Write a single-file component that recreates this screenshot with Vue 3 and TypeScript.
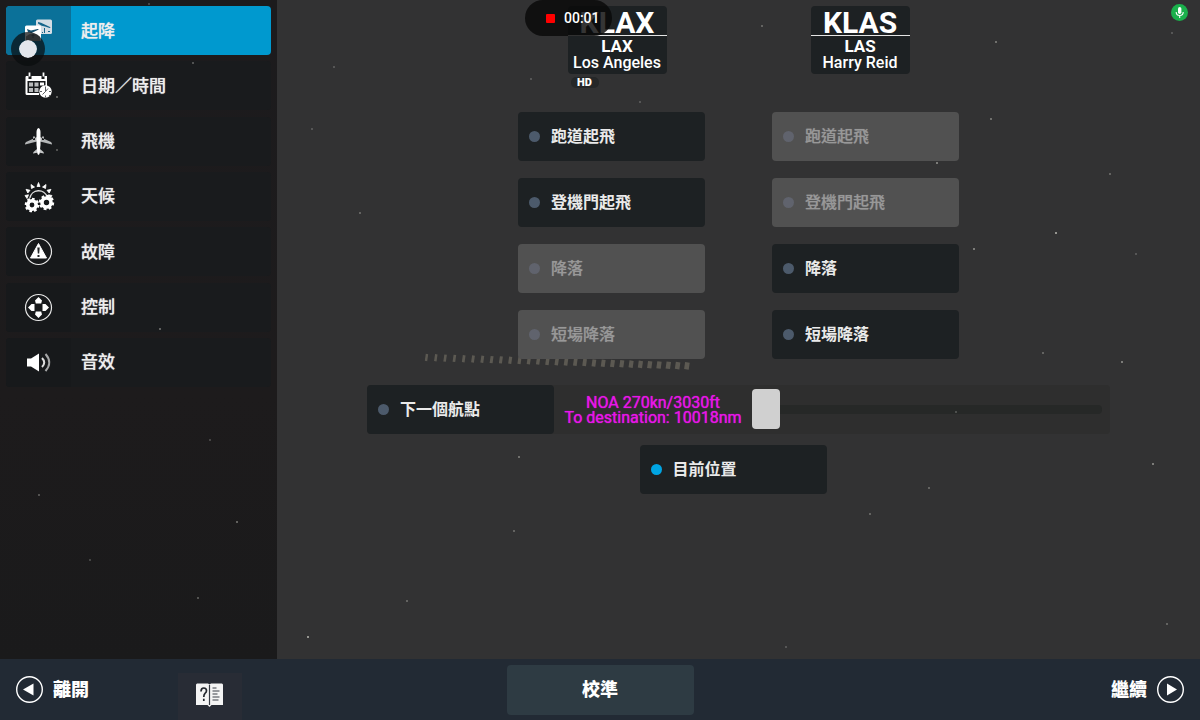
<script setup lang="ts">
import { ref } from 'vue'

interface MenuItem { id: string; label: string }
interface StartOption { id: string; label: string; disabled: boolean }

const menu: MenuItem[] = [
  { id: 'route', label: '起降' },
  { id: 'date', label: '日期／時間' },
  { id: 'plane', label: '飛機' },
  { id: 'weather', label: '天候' },
  { id: 'failure', label: '故障' },
  { id: 'control', label: '控制' },
  { id: 'sound', label: '音效' },
]
const options: StartOption[] = [
  { id: 'dep-runway', label: '跑道起飛', disabled: false },
  { id: 'arr-runway', label: '跑道起飛', disabled: true },
  { id: 'dep-gate', label: '登機門起飛', disabled: false },
  { id: 'arr-gate', label: '登機門起飛', disabled: true },
  { id: 'dep-landing', label: '降落', disabled: true },
  { id: 'arr-landing', label: '降落', disabled: false },
  { id: 'dep-short', label: '短場降落', disabled: true },
  { id: 'arr-short', label: '短場降落', disabled: false },
]
const airports = [
  { icao: 'KLAX', iata: 'LAX', name: 'Los Angeles', hd: true },
  { icao: 'KLAS', iata: 'LAS', name: 'Harry Reid', hd: false },
]
const stars: [number, number, number][] = [
  [762, 26, 0.4], [996, 42, 0.5], [991, 119, 0.5], [937, 163, 0.6], [1056, 233, 0.8], [974, 249, 0.6],
  [1043, 353, 0.4], [1122, 362, 0.6], [1153, 464, 0.6], [929, 488, 0.4], [870, 514, 0.4], [514, 531, 0.4],
  [519, 457, 0.5], [360, 213, 0.4], [308, 637, 0.8], [312, 129, 0.3], [334, 67, 0.3], [531, 79, 0.3],
  [640, 102, 0.3], [1110, 174, 0.4], [1167, 624, 0.4], [237, 522, 0.5], [160, 329, 0.5], [193, 63, 0.4],
  [57, 97, 0.5], [57, 150, 0.4], [149, 4, 0.3], [39, 495, 0.4], [198, 598, 0.4], [1136, 254, 0.3],
  [407, 601, 0.4], [786, 647, 0.3], [210, 440, 0.3], [90, 560, 0.3], [956, 412, 0.3], [1172, 33, 0.3],
]
const cabinWindows = Array.from({ length: 29 }, (_, i) => ({
  x: 426 + i * 9.3,
  y: 357 + i * 0.3,
  w: 2.4 + i * 0.08,
}))

const active = ref('route')
const start = ref('current')
const progress = ref(0)
</script>

<template>
  <div class="screen">
    <div class="body">
      <aside class="sidebar">
        <nav class="menu" aria-label="設定">
          <button
            v-for="item in menu"
            :key="item.id"
            type="button"
            class="menu-item"
            :class="{ active: active === item.id }"
            @click="active = item.id"
          >
            <span class="menu-icon">
              <svg viewBox="0 0 27 27" aria-hidden="true">
                <g v-if="item.id === 'route'">
                  <rect x="11" y="2.500" width="16" height="14.500" rx="1.500" fill="#d4dde4" />
                  <path d="M13 5l3 .7 9 4.200q1.400 1-.4 1l-4.600-1.400-3.400-.8L13 6.500z" fill="#17658a" />
                  <path d="M19.500 11v5M17 15.500h1M23 14.500h2" stroke="#17658a" stroke-width="1" />
                  <rect x="0" y="8.500" width="16" height="15.500" rx="1.500" fill="#fff" />
                  <path d="M2 12l4 1.600 6.500-1.600q2-.2.8.8L6.500 16l-3.500-.7z" fill="#17506d" />
                  <path d="M1 19.500q6.500-6 14 0V24H1z" fill="#8b8f91" />
                  <path d="M8 17v4M6.500 18.500h3" stroke="#4c5c66" stroke-width="1" />
                </g>
                <g v-else-if="item.id === 'date'">
                  <path d="M1 4h2.500v3h3V4h10v3h3V4H22v10.500h-1.500V9h-18v12H14v2H2q-1.500 0-1.500-1.500V5z" fill="#fff" />
                  <path d="M4.500 .5v4M18.500 .5v4" stroke="#fff" stroke-width="1.800" />
                  <path d="M4 10.500h4v4H4zM9.500 10.500h4v4h-4zM4 16h4v4H4zM9.500 16h4v4h-4z" fill="#b9bbbc" />
                  <path d="M15 10.500h4v3h-4z" fill="#fff" />
                  <circle cx="20.500" cy="19.500" r="6.200" fill="#fff" />
                  <path d="M20.500 14.500v5l-3 3M20.500 19.500l2.500-3M15 19.500h2M24 19.500h2M20.500 23.500v2M24 23l1 1" stroke="#4a4d50" stroke-width=".9" fill="none" />
                </g>
                <g v-else-if="item.id === 'plane'">
                  <path d="M12 9L1 14q-1.200 1-1 2.500l12-3h3l12 3q.2-1.500-1-2.500L15 9zM8 8.500h2V12H8zM17 8.500h2V12h-2z" fill="#b4b6b7" />
                  <path d="M12 21l-3.500 3-.5 1.500 5.500-1 5.500 1-.5-1.500L15 21z" fill="#c4c6c7" />
                  <path d="M11.500 4q.2-3.500 2-4 1.800.5 2 4v13l-1 9-1 1-1-1-1-9z" fill="#fff" />
                </g>
                <g v-else-if="item.id === 'weather'">
                  <path d="M4.800 15a9 9 0 0 1 17.400-1" fill="none" stroke="#ddd" stroke-width="1.300" />
                  <path
                    d="M12 3.500L13.500-.5 15 3.500zM6.500 5.500L6 1.500l3.500 2.500zM17.500 4L21 1.500l-.5 4zM2.800 10L1 6.300l4 1zM22 7.300l4-1L24.200 10zM2 15.500L0 12.500l3.500-.7zM23.500 11.800l3.500.7-2 3z"
                    fill="#fff"
                    stroke="#fff"
                    stroke-width=".8"
                  />
                  <circle cx="7" cy="22" r="4.200" fill="none" stroke="#fff" stroke-width="3.600" />
                  <circle cx="7" cy="22" r="6.200" pathLength="16" fill="none" stroke="#fff" stroke-width="2.200" stroke-dasharray="1.100 .9" />
                  <circle cx="21.500" cy="19.500" r="4.500" fill="none" stroke="#fff" stroke-width="3.600" />
                  <circle cx="21.500" cy="19.500" r="6.600" pathLength="16" fill="none" stroke="#fff" stroke-width="2.200" stroke-dasharray="1.100 .9" />
                </g>
                <g v-else-if="item.id === 'failure'">
                  <circle cx="13.500" cy="13.500" r="13" fill="none" stroke="#e6e6e6" stroke-width="1.200" />
                  <path d="M13.500 5.500l8 14.500h-16z" fill="#fff" stroke="#fff" stroke-linejoin="round" />
                  <path d="M12.300 9.500h2.400l-.5 6h-1.400zM12.500 17h2v2h-2z" fill="#222527" />
                </g>
                <g v-else-if="item.id === 'control'">
                  <circle cx="13.500" cy="13.500" r="13" fill="none" stroke="#e6e6e6" stroke-width="1.200" />
                  <path d="M13.500 3l3.500 3.500-.8 3h-5.400l-.8-3zM13.500 24l3.500-3.500-.8-3h-5.400l-.8 3zM3 13.500L6.500 10h3v7h-3zM24 13.500L20.500 10h-3v7h3z" fill="#fff" />
                </g>
                <g v-else>
                  <path d="M2 9.500h4l8-5v18l-8-5H2z" fill="#fff" />
                  <path d="M17 9q4.500 4.500 0 9" fill="none" stroke="#ddd" stroke-width="2" />
                  <path d="M20.500 5q7.500 8.500 0 17" fill="none" stroke="#a4a5a6" stroke-width="2" />
                </g>
              </svg>
            </span>
            <span class="menu-label">{{ item.label }}</span>
          </button>
        </nav>
      </aside>

      <main class="content">
        <section class="airports">
          <div v-for="a in airports" :key="a.icao" class="airport">
            <div class="airport-card">
              <strong class="icao">{{ a.icao }}</strong>
              <strong class="iata">{{ a.iata }}</strong>
              <span class="name">{{ a.name }}</span>
            </div>
            <span v-if="a.hd" class="hd">HD</span>
          </div>
        </section>

        <section class="options">
          <label v-for="o in options" :key="o.id" class="option" :class="{ disabled: o.disabled }">
            <input v-model="start" type="radio" name="start" :value="o.id" :disabled="o.disabled" />
            <span>{{ o.label }}</span>
          </label>
        </section>

        <section class="waypoint">
          <label class="option">
            <input v-model="start" type="radio" name="start" value="waypoint" />
            <span>下一個航點</span>
          </label>
          <label class="route-info" for="route-slider">NOA 270kn/3030ft<br />To destination: 10018nm</label>
          <input id="route-slider" v-model.number="progress" class="slider" type="range" min="0" max="100" />
        </section>

        <section class="position">
          <label class="option">
            <input v-model="start" type="radio" name="start" value="current" />
            <span>目前位置</span>
          </label>
        </section>
      </main>

      <svg class="sky" viewBox="0 0 1200 720" preserveAspectRatio="xMinYMin slice" aria-hidden="true">
        <circle v-for="(s, i) in stars" :key="i" :cx="s[0]" :cy="s[1]" r="1" fill="#d8d8d0" :opacity="s[2]" />
        <path
          v-for="(w, i) in cabinWindows"
          :key="'w' + i"
          :d="`M${w.x + 1} ${w.y - 3}l-1 7`"
          stroke="#b5ad94"
          :stroke-width="w.w"
          opacity="0.32"
        />
      </svg>
    </div>

    <footer class="footer">
      <div class="footer-left">
        <button type="button" class="link-button">
          <svg viewBox="0 0 27 27" aria-hidden="true">
            <circle cx="13.500" cy="13.500" r="12.800" fill="none" stroke="#fff" stroke-width="1.400" />
            <path d="M7 13.500l10.500-6v12z" fill="#fff" />
          </svg>
          <span>離開</span>
        </button>
        <button type="button" class="manual" aria-label="說明">
          <svg viewBox="0 0 27 24" aria-hidden="true">
            <path d="M0 1.500l1-1h11l1.500 1 1.500-1h11l1 1V22H15.500l-2 2-2-2H0z" fill="#f4f4f4" />
            <path d="M13.500 2v20" stroke="#353a42" stroke-width="1.200" />
            <path d="M5 8.500q0-3.500 2.800-3.500 2.700 0 2.700 2.800 0 1.500-1.500 2.600Q7.800 11.500 7.800 14M7.800 15.800V18" fill="none" stroke="#23272d" stroke-width="1.700" />
            <path d="M16.500 5h4M16.500 8h7M16.500 11h5M16.500 14h7M16.500 17h6" stroke="#3a3f46" stroke-width="1.200" />
          </svg>
        </button>
      </div>
      <button type="button" class="calibrate">校準</button>
      <div class="footer-right">
        <button type="button" class="link-button">
          <span>繼續</span>
          <svg viewBox="0 0 27 27" aria-hidden="true">
            <circle cx="13.500" cy="13.500" r="12.800" fill="none" stroke="#fff" stroke-width="1.400" />
            <path d="M20 13.500l-10-6v12z" fill="#fff" />
          </svg>
        </button>
      </div>
    </footer>

    <div class="recorder"><i></i><time>00:01</time></div>
    <div class="touch"></div>
    <div class="mic">
      <svg viewBox="0 0 17 17" aria-hidden="true">
        <rect x="7" y="3" width="3.400" height="7" rx="1.700" fill="#fff" />
        <path d="M5.200 8q0 3.500 3.500 3.500T12.200 8M8.700 11.500V14" fill="none" stroke="#fff" stroke-width="1.100" />
      </svg>
    </div>
  </div>
</template>

<style>
body { margin: 0; background: #323233; }
</style>

<style scoped>
* { box-sizing: border-box; }
.screen {
  position: relative;
  min-height: 100vh;
  display: flex;
  flex-direction: column;
  overflow: hidden;
  background: #323233;
  color: #fff;
  font-family: Roboto, "Noto Sans CJK TC", sans-serif;
}
button { border: 0; margin: 0; padding: 0; background: none; color: inherit; font: inherit; cursor: pointer; }
.body { position: relative; flex: 1; display: flex; }
.sky { position: absolute; inset: 0; width: 100%; height: 100%; pointer-events: none; }
.sidebar {
  flex: 0 0 277px;
  padding: 6px;
  background: linear-gradient(#1c1b1d, #1d1b1c 60%, #1a1a1b);
}
.menu { display: flex; flex-direction: column; justify-content: space-between; min-height: 381px; }
.menu-item {
  display: flex;
  height: 49px;
  border-radius: 4px;
  overflow: hidden;
  background: #191b1d;
  text-align: left;
}
.menu-icon { width: 65px; display: grid; place-items: center; background: #17191b; }
.menu-icon svg { width: 27px; height: 27px; overflow: visible; }
.menu-label {
  flex: 1;
  align-self: center;
  padding-left: 10px;
  font-size: 17px;
  font-weight: 500;
  line-height: 24px;
  color: #eee;
  text-shadow: 0 0 1px rgba(238, 238, 238, 0.8);
}
.menu-item.active { background: #0099cf; }
.menu-item.active .menu-icon { background: #0b7199; }
.content { flex: 1; min-width: 0; display: flex; flex-direction: column; align-items: center; padding-top: 6px; }
.airports { display: flex; gap: 144px; height: 106px; }
.airport { width: 99px; }
.airport-card {
  display: flex;
  flex-direction: column;
  align-items: center;
  height: 68px;
  border-radius: 4px;
  background: #1d2123;
  white-space: nowrap;
}
.icao { align-self: stretch; height: 30px; border-bottom: 1px solid #e4e4e4; font-size: 30px; line-height: 34px; text-align: center; }
.iata { margin-top: 2px; font-size: 17px; line-height: 17px; }
.name { font-size: 16px; line-height: 16px; font-weight: 500; }
.hd {
  display: block;
  width: 28px;
  margin: 3px;
  border-radius: 5px;
  background: #252728;
  font-size: 11px;
  font-weight: 900;
  line-height: 11px;
  text-align: center;
}
.options { display: grid; grid-template-columns: 187px 187px; gap: 17px 67px; }
.option {
  position: relative;
  z-index: 1;
  display: flex;
  align-items: center;
  gap: 11px;
  width: 187px;
  height: 49px;
  padding-left: 11px;
  border-radius: 4px;
  background: #1d2123;
  font-size: 16px;
  font-weight: 700;
  line-height: 24px;
  color: #eaeaea;
}
.option input { appearance: none; width: 11px; height: 11px; margin: 0; border-radius: 50%; background: #4c5a6b; }
.option input:checked { background: #00a5e3; }
.option.disabled { background: #515151; color: #989898; font-weight: 500; text-shadow: 0 0 1px rgba(152, 152, 152, 0.7); }
.option.disabled input { background: #60636d; }
.waypoint {
  display: flex;
  align-items: center;
  width: 743px;
  margin-top: 26px;
  padding-right: 8px;
  border-radius: 4px;
  background: #2e2e2e;
}
.route-info {
  width: 198px;
  font-size: 16px;
  font-weight: 400;
  line-height: 15px;
  text-align: center;
  color: #e815e8;
  text-shadow: 0 0 1px #e815e8;
}
.slider { appearance: none; flex: 1; min-width: 0; height: 40px; margin: 0; background: none; }
.slider::-webkit-slider-runnable-track { height: 9px; border-radius: 4px; background: #262827; }
.slider::-webkit-slider-thumb {
  appearance: none;
  width: 28px;
  height: 40px;
  margin-top: -16px;
  border-radius: 4px;
  background: #d0d0d0;
}
.position { margin-top: 11px; padding-right: 11px; }
.footer {
  position: relative;
  display: grid;
  grid-template-columns: 1fr 187px 1fr;
  align-items: center;
  height: 61px;
  padding: 0 16px;
  background: #222a34;
  font-size: 18px;
  font-weight: 900;
  line-height: 26px;
  text-shadow: 0 0 1px #fff;
}
.footer-left { display: flex; align-items: center; justify-content: flex-start; gap: 89px; }
.footer-right { display: flex; justify-content: flex-end; }
.link-button { display: flex; align-items: center; gap: 10px; }
.link-button svg { width: 27px; height: 27px; }
.manual { display: grid; place-items: center; width: 64px; height: 47px; margin-top: 14px; padding: 0 2px 3px 0; background: #282c35; }
.manual svg { width: 27px; height: 24px; }
.calibrate { height: 50px; border-radius: 4px; background: #2e3b43; }
.recorder {
  position: absolute;
  top: 0;
  left: 525px;
  display: flex;
  align-items: center;
  gap: 9px;
  width: 87px;
  height: 36px;
  padding-left: 21px;
  border-radius: 18px;
  background: rgba(8, 8, 8, 0.82);
  font-size: 14px;
  font-weight: 500;
}
.recorder i { width: 9px; height: 9px; border-radius: 1px; background: #f00; }
.touch {
  position: absolute;
  top: 32px;
  left: 11px;
  width: 34px;
  height: 34px;
  border: 8px solid rgba(10, 12, 14, 0.72);
  border-radius: 50%;
  background: #e3e6ec;
  background-clip: padding-box;
}
.mic { position: absolute; top: 4px; right: 12px; width: 17px; height: 17px; border-radius: 50%; background: #1bb04c; }
.mic svg { display: block; width: 17px; height: 17px; }
</style>
